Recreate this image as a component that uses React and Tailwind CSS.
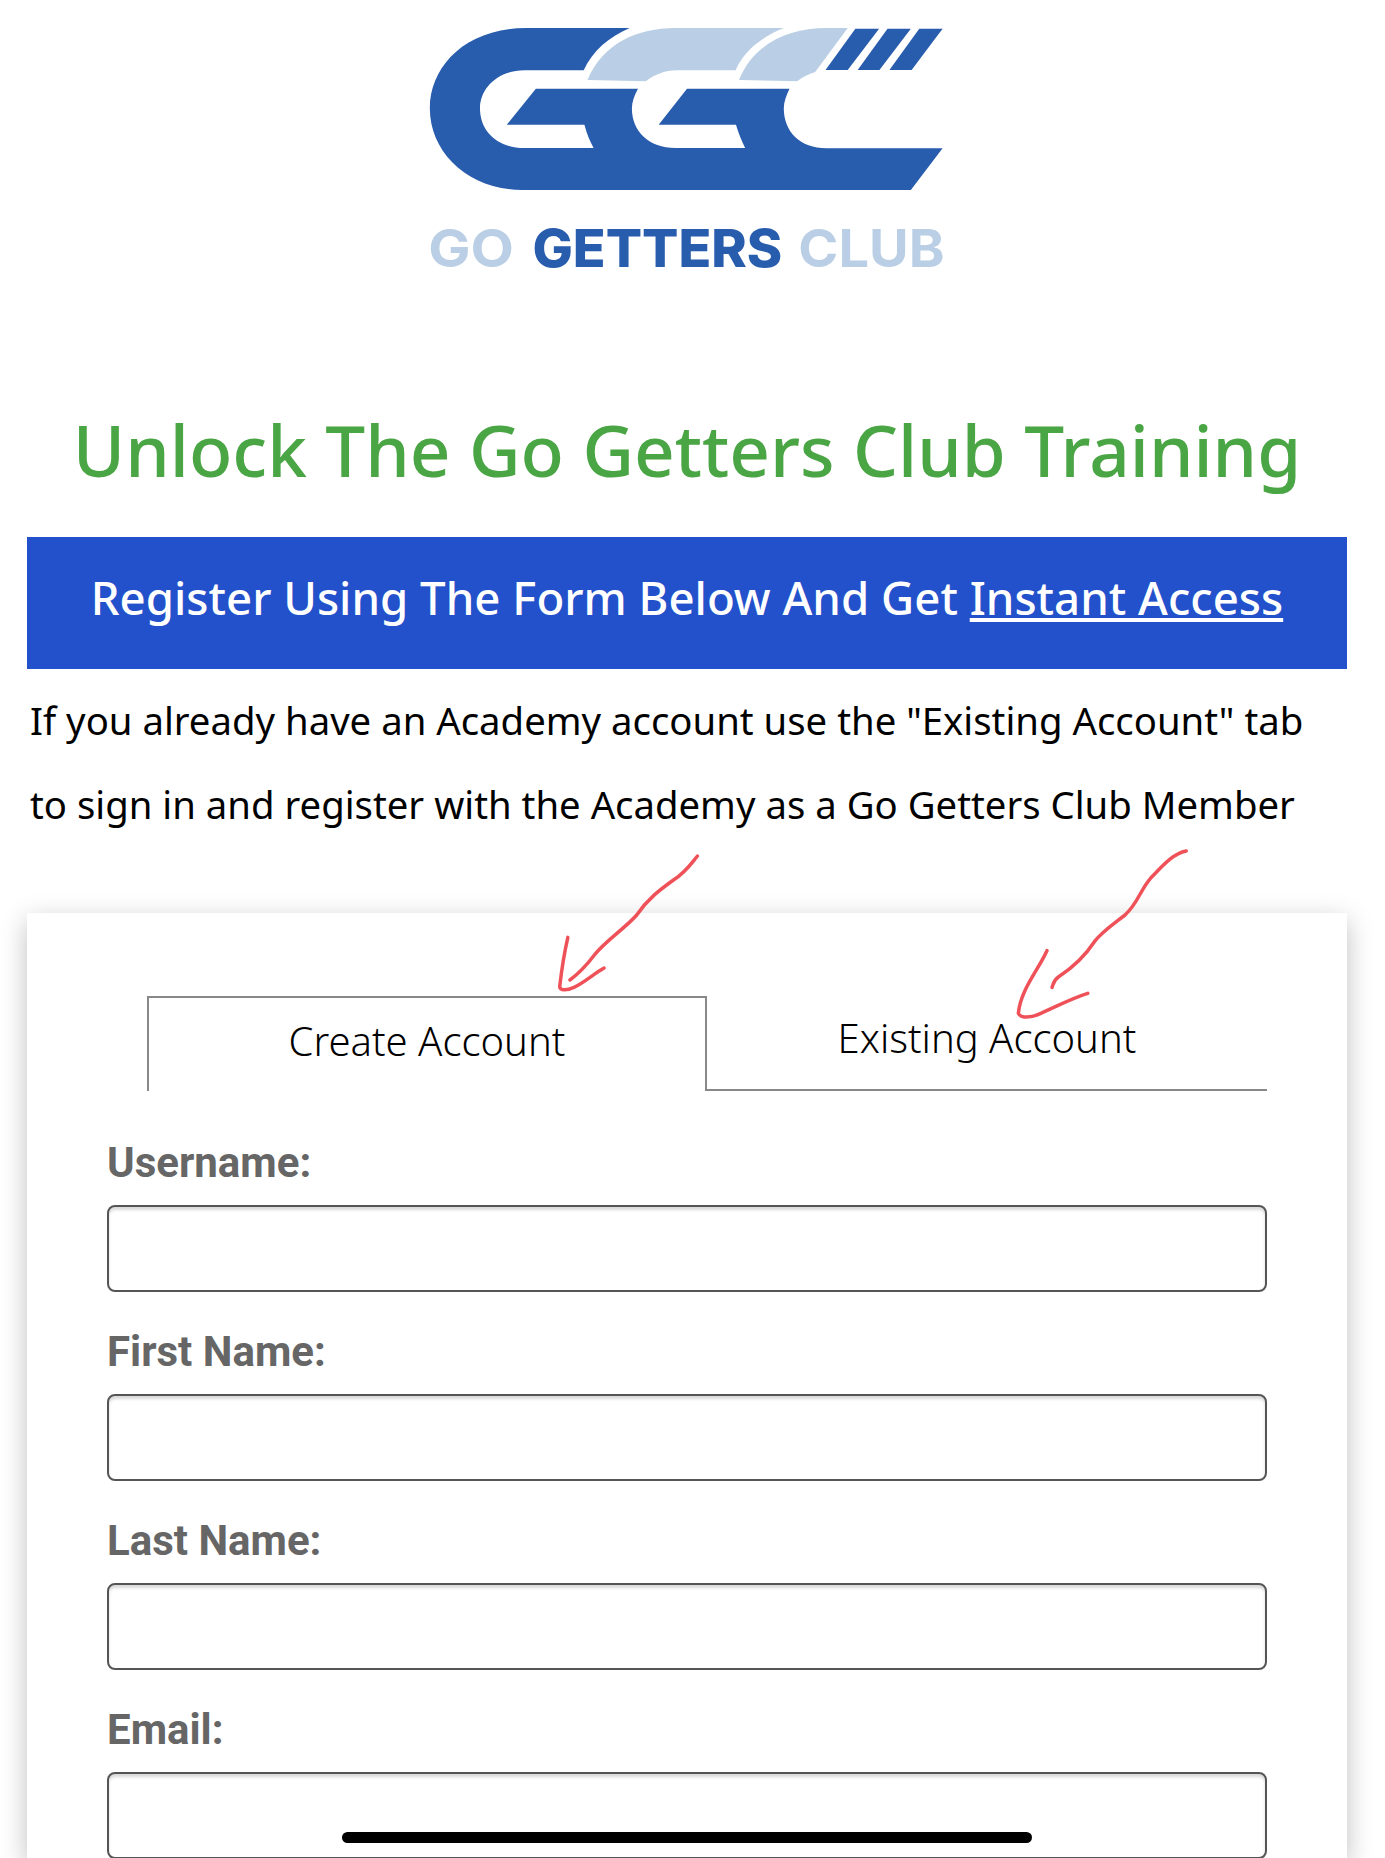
const fields = ["Username:", "First Name:", "Last Name:", "Email:"];

const Logo = () => (
  <svg viewBox="0 0 1568 900" preserveAspectRatio="none" className="ml-[400px] block h-[300px] w-[600px]">
    <path
      fill="#285cad"
      d="M600 84 L330 84 C170 84 78 200 78 325 C78 460 180 570 320 570 L1335 570 L1418 445 L1115 445 C1045 445 1003 395 1003 325 C1003 305 1010 285 1018 266 L750 266 L676 374 L878 374 C885 400 892 420 902 444 L720 444 C650 444 606 395 606 325 C606 305 613 285 622 266 L355 266 L279 374 L482 374 C488 400 495 420 506 444 L325 444 C255 444 209 395 209 325 C209 265 255 211 325 211 L480 211 C505 150 545 112 600 84 Z"
    />
    <path
      fill="#bacfe5"
      d="M1003 84 L720 84 C620 84 530 130 490 240 L642 244 C665 225 690 211 725 211 L877 211 C900 150 945 112 1003 84 Z"
    />
    <path
      fill="#bacfe5"
      d="M1170 84 L1115 84 C1015 84 925 130 886 240 L1038 244 C1050 233 1068 222 1085 216 Z"
    />
    <path fill="#285cad" d="M1190 86 L1252 86 L1170 210 L1112 210 Z" />
    <path fill="#285cad" d="M1274 86 L1335 86 L1253 210 L1196 210 Z" />
    <path fill="#285cad" d="M1357 86 L1418 86 L1337 210 L1279 210 Z" />
    <text x="74" y="800" fill="#bacfe5" fontFamily="Inter, sans-serif" fontSize="158" fontWeight="700" textLength="224" lengthAdjust="spacingAndGlyphs">
      GO
    </text>
    <text x="346" y="800" fill="#285cad" fontFamily="Inter, sans-serif" fontSize="158" fontWeight="800" textLength="653" lengthAdjust="spacingAndGlyphs">
      GETTERS
    </text>
    <text x="1041" y="800" fill="#bacfe5" fontFamily="Inter, sans-serif" fontSize="158" fontWeight="700" textLength="382" lengthAdjust="spacingAndGlyphs">
      CLUB
    </text>
  </svg>
);

const Arrows = () => (
  <svg
    viewBox="0 0 1568 900"
    preserveAspectRatio="none"
    className="pointer-events-none absolute left-[500px] top-[830px] h-[300px] w-[800px]"
    fill="none"
    stroke="#ef5159"
    strokeWidth="3.5"
    strokeLinecap="round"
  >
    <path vectorEffect="non-scaling-stroke" d="M387 78 C375 100 365 125 340 150 C315 178 290 205 268 255 C245 295 205 335 185 375 C170 405 155 430 137 450" />
    <path vectorEffect="non-scaling-stroke" d="M133 322 C125 375 120 430 117 470 C118 482 130 482 145 472 C165 458 185 430 204 414" />
    <path vectorEffect="non-scaling-stroke" d="M1345 63 C1320 70 1300 105 1275 145 C1255 180 1250 220 1225 255 C1200 285 1180 305 1165 335 C1150 370 1125 410 1095 440 C1085 450 1085 460 1082 472" />
    <path vectorEffect="non-scaling-stroke" d="M1072 362 C1055 420 1020 480 1016 550 C1020 565 1040 565 1060 550 C1090 530 1120 505 1152 490" />
  </svg>
);

export default function App() {
  return (
    <div className="relative h-[1858px] w-[1385px] overflow-hidden bg-white font-['Noto_Sans',sans-serif] text-black">
      <Logo />
      <div className="pl-[27px] pr-[38px]">
        <h1 className="mb-[37px] mt-[100px] whitespace-nowrap text-center text-[71px] font-medium leading-[100px] text-[#4aa544] [font-stretch:75%]">
          Unlock The Go Getters Club Training
        </h1>
        <div className="flex h-[132px] items-center justify-center whitespace-nowrap bg-[#2251cb] pb-[12px] text-[45.6px] font-medium text-white [font-stretch:75%]">
          <span>
            Register Using The Form Below And Get <span className="underline">Instant Access</span>
          </span>
        </div>
        <p className="mb-[67px] mt-[9px] whitespace-nowrap pl-[3px] text-[38.3px] leading-[84px] [font-stretch:75%]">
          If you already have an Academy account use the "Existing Account" tab
          <br />
          to sign in and register with the Academy as a Go Getters Club Member
        </p>
        <div className="bg-white px-[80px] pt-[83px] shadow-[0_8px_25px_rgba(0,0,0,0.25)]">
          <div className="ml-[40px] flex h-[95px] text-[40px] font-light [font-stretch:75%]">
            <div className="flex w-[560px] items-center justify-center border-x-2 border-t-2 border-[#888888] pb-[8px]">
              Create Account
            </div>
            <div className="flex flex-1 items-center justify-center border-b-2 border-[#888888] pb-[10px]">
              Existing Account
            </div>
          </div>
          <div className="mt-[50px] flex flex-col gap-[38px]">
            {fields.map((f) => (
              <div key={f}>
                <label className="mb-[20px] block font-['Roboto',sans-serif] text-[42px] font-bold leading-[44px] text-[#666666]">
                  {f}
                </label>
                <div className="h-[87px] rounded-[8px] border-2 border-[#555555] bg-white shadow-[inset_0_3px_3px_rgba(0,0,0,0.15)]" />
              </div>
            ))}
          </div>
        </div>
      </div>
      <Arrows />
      <div className="absolute left-[342px] top-[1832px] h-[11px] w-[690px] rounded-full bg-black" />
    </div>
  );
}
